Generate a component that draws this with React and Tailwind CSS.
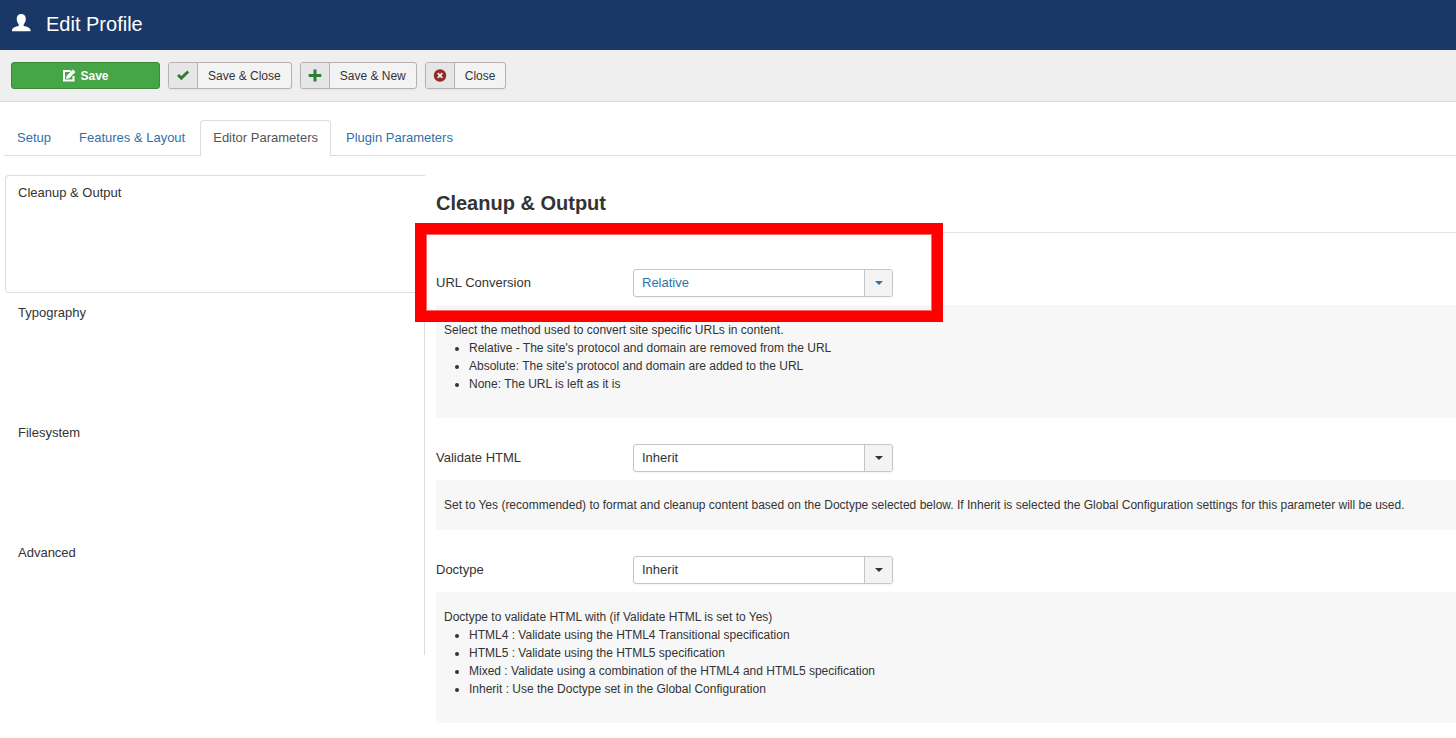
import React from "react";

function UserIcon() {
  return (
    <svg viewBox="0 0 20 20" className="h-5 w-5 fill-white" aria-hidden="true">
      <path d="M10.200 0C7.500 0 5.700 1.900 5.700 4.700C5.700 7.200 6.600 9 7.700 10.300V12C4.400 12.600 1 14 1 16.300V17.300H19.600V16.300C19.600 14 16 12.600 12.700 12V10.300C13.900 9 14.800 7.200 14.800 4.700C14.800 1.900 13 0 10.200 0Z" />
    </svg>
  );
}

function EditIcon() {
  return (
    <svg viewBox="0 0 14 14" className="h-[14px] w-[14px]" aria-hidden="true">
      <path d="M8.500 2H2V11.500H11.500V7" fill="none" stroke="#fff" strokeWidth="2" />
      <path d="M10.900 0.500L13.500 3.100L7.300 9.300L4 10L4.700 6.700Z" fill="#fff" />
    </svg>
  );
}

function CheckIcon() {
  return (
    <svg viewBox="0 0 14 14" className="h-[14px] w-[14px] fill-[#2f7d32]" aria-hidden="true">
      <path d="M11.300 1.400L13.200 3.400L5.300 11.200L1 6.900L3 4.900L5.300 7Z" />
    </svg>
  );
}

function PlusIcon() {
  return (
    <svg viewBox="0 0 14 14" className="h-[14px] w-[14px] fill-[#2f7d32]" aria-hidden="true">
      <path d="M5.500 0.500H8.500V5H13.300V8H8.500V12.500H5.500V8H0.700V5H5.500Z" />
    </svg>
  );
}

function CancelIcon() {
  return (
    <svg viewBox="0 0 14 14" className="h-[14px] w-[14px]" aria-hidden="true">
      <circle cx="7" cy="6.500" r="6.200" fill="#942a25" />
      <path d="M4.700 4.200L9.300 8.800M9.300 4.200L4.700 8.800" stroke="#eee" strokeWidth="1.800" />
    </svg>
  );
}

function ToolButton({ icon, children }) {
  return (
    <button
      type="button"
      className="flex h-[27px] items-stretch overflow-hidden rounded-[3px] border border-[#b3b3b3] bg-[#f3f3f3] text-xs text-[#333] shadow-[0_1px_2px_rgba(0,0,0,0.05)]"
    >
      <span className="flex w-[29px] items-center justify-center border-r border-[#b3b3b3] bg-[#e6e6e6]">
        {icon}
      </span>
      <span className="flex items-center px-[10px]">{children}</span>
    </button>
  );
}

function Tab({ active, children }) {
  return (
    <a
      href="#"
      aria-current={active ? "page" : undefined}
      className={
        active
          ? "-mb-px rounded-t border border-b-0 border-[#ddd] bg-white px-3 pt-2 pb-[9px] leading-[18px] text-[#555]"
          : "border border-b-0 border-transparent px-3 py-2 leading-[18px] text-[#3071a9]"
      }
    >
      {children}
    </a>
  );
}

function SideItem({ active, children }) {
  return (
    <>
      <a
        href="#"
        className={
          active
            ? "block h-[118px] rounded-l border border-r-0 border-[#ddd] bg-white px-3 py-2 leading-[18px]"
            : "block h-[118px] border-r border-[#ddd] px-[13px] py-[9px] leading-[18px]"
        }
      >
        {children}
      </a>
      <div className="h-[2px] border-r border-[#ddd]" />
    </>
  );
}

function Field({ id, label, value, options, linked, highlighted, children }) {
  return (
    <div className="mb-[26px]">
      <div className="relative mb-2 flex h-7 items-center">
        <label htmlFor={id} className="w-[197px] shrink-0">
          {label}
        </label>
        <div
          className={
            "grid h-7 w-[260px] grid-cols-[1fr_28px] overflow-hidden rounded-[3px] border border-[#c5c5c5] bg-white shadow-[0_1px_2px_rgba(0,0,0,0.05)] " +
            (linked ? "text-[#3071a9]" : "text-[#333]")
          }
        >
          <select
            id={id}
            defaultValue={value}
            className="col-span-2 col-start-1 row-start-1 appearance-none bg-transparent px-2 leading-[18px] outline-none"
          >
            {options.map((option) => (
              <option key={option}>{option}</option>
            ))}
          </select>
          <span className="pointer-events-none col-start-2 row-start-1 flex items-center justify-center border-l border-[#c5c5c5] bg-[#f3f3f3]">
            <svg viewBox="0 0 8 4" className="h-1 w-2 fill-current" aria-hidden="true">
              <path d="M0 0H8L4 4Z" />
            </svg>
          </span>
        </div>
        {highlighted && (
          <div className="pointer-events-none absolute -top-[46px] -left-[21px] h-[99px] w-[528px] border-[11px] border-[#ff0000] shadow-[inset_0_0_0_1px_#ff6666]" />
        )}
      </div>
      <div className="bg-[#f7f7f7] px-2 py-4 text-xs leading-[18px]">{children}</div>
    </div>
  );
}

function Bullets({ items }) {
  return (
    <ul className="mb-[9px] ml-[25px] list-disc">
      {items.map((item) => (
        <li key={item}>{item}</li>
      ))}
    </ul>
  );
}

export default function App() {
  return (
    <div className="overflow-x-hidden bg-white font-['Liberation_Sans',Arial,sans-serif] text-[13px] leading-[18px] text-[#333]">
      <header className="flex h-[50px] items-center gap-[15px] bg-[#1a3867] pr-4 pb-[2px] pl-[11px] text-white">
        <UserIcon />
        <h1 className="text-xl leading-6">Edit Profile</h1>
      </header>

      <div className="flex gap-2 border-b border-[#ddd] bg-[#efefef] px-[11px] py-3">
        <button
          type="button"
          className="flex h-[27px] w-[149px] items-center justify-center gap-1 rounded-[3px] border border-[#3a8a3a] bg-[#46a546] text-xs font-bold text-white"
        >
          <EditIcon />
          Save
        </button>
        <ToolButton icon={<CheckIcon />}>Save &amp; Close</ToolButton>
        <ToolButton icon={<PlusIcon />}>Save &amp; New</ToolButton>
        <ToolButton icon={<CancelIcon />}>Close</ToolButton>
      </div>

      <nav className="mt-[18px] ml-1 flex gap-[2px] border-b border-[#ddd]">
        <Tab>Setup</Tab>
        <Tab>Features &amp; Layout</Tab>
        <Tab active>Editor Parameters</Tab>
        <Tab>Plugin Parameters</Tab>
      </nav>

      <div className="mt-[19px] flex items-start pl-[5px]">
        <nav className="flex w-[420px] shrink-0 flex-col">
          <SideItem active>Cleanup &amp; Output</SideItem>
          <SideItem>Typography</SideItem>
          <SideItem>Filesystem</SideItem>
          <SideItem>Advanced</SideItem>
        </nav>

        <main className="ml-[11px] min-w-0 flex-1">
          <h2 className="mb-9 border-b border-[#e5e5e5] pt-4 pb-[17px] text-xl leading-6 font-bold">
            Cleanup &amp; Output
          </h2>
          <Field
            id="url-conversion"
            label="URL Conversion"
            value="Relative"
            options={["Relative", "Absolute", "None"]}
            linked
            highlighted
          >
            <p>Select the method used to convert site specific URLs in content.</p>
            <Bullets
              items={[
                "Relative - The site's protocol and domain are removed from the URL",
                "Absolute: The site's protocol and domain are added to the URL",
                "None: The URL is left as it is",
              ]}
            />
          </Field>
          <Field id="validate-html" label="Validate HTML" value="Inherit" options={["Inherit", "Yes", "No"]}>
            <p>
              Set to Yes (recommended) to format and cleanup content based on the Doctype selected below. If
              Inherit is selected the Global Configuration settings for this parameter will be used.
            </p>
          </Field>
          <Field id="doctype" label="Doctype" value="Inherit" options={["Inherit", "HTML4", "HTML5", "Mixed"]}>
            <p>Doctype to validate HTML with (if Validate HTML is set to Yes)</p>
            <Bullets
              items={[
                "HTML4 : Validate using the HTML4 Transitional specification",
                "HTML5 : Validate using the HTML5 specification",
                "Mixed : Validate using a combination of the HTML4 and HTML5 specification",
                "Inherit : Use the Doctype set in the Global Configuration",
              ]}
            />
          </Field>
        </main>
      </div>
    </div>
  );
}
